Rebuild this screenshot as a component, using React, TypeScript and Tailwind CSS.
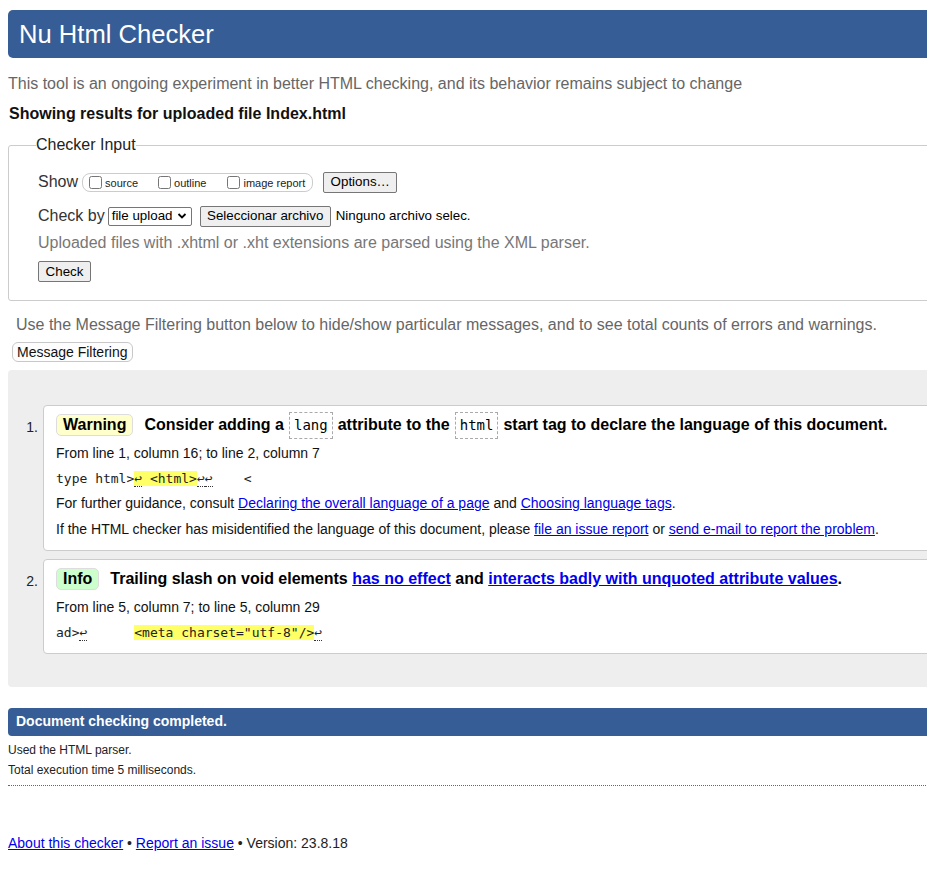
import React from 'react';

function Btn({ children, className = '' }: { children: React.ReactNode; className?: string }) {
  return (
    <button className={`h-[21px] px-[6px] bg-[#efefef] border border-[#767676] rounded-[2px] text-[13.33px] leading-none text-black ${className}`}>
      {children}
    </button>
  );
}

function Lf() {
  return <span className="border-b border-dotted border-[#333]">↩</span>;
}

function CodeBox({ children }: { children: React.ReactNode }) {
  return (
    <code className="inline-flex items-center h-[27px] px-[4px] mx-[5px] border border-dashed border-[#aaa] font-['DejaVu_Sans_Mono',monospace] font-normal text-[14px]">
      {children}
    </code>
  );
}

export default function App() {
  return (
    <div className="w-[927px] h-[885px] overflow-hidden bg-white text-black font-['Liberation_Sans',Arial,sans-serif]">
      <div className="w-[1000px] pl-2 pt-[10px]">
        <h1 className="h-12 flex items-center pl-[11px] bg-[#365d95] text-white text-[25.6px] font-normal rounded-l-[5px]">
          Nu Html Checker
        </h1>
        <p className="mt-[17px] text-base leading-[18px] text-[#666]">
          This tool is an ongoing experiment in better HTML checking, and its behavior remains subject to change
        </p>
        <p className="mt-[12px] pl-px text-base leading-[18px] font-bold text-[#111]">Showing results for uploaded file Index.html</p>

        {/* Checker input */}
        <fieldset className="mt-[13px] border border-[#ccc] rounded-[3px] pl-[29px] pb-[17px]">
          <legend className="-ml-[2px] text-base leading-[18px] text-[#222]">Checker Input</legend>
          <div className="mt-[17px] h-[22px] flex items-center">
            <span className="text-base text-[#333]">Show</span>
            <div className="ml-[4px] h-[19px] flex items-center pl-[6px] pr-[7px] border border-[#ccc] rounded-[8px]">
              <label className="flex items-center">
                <input type="checkbox" className="w-[13px] h-[13px] m-0" />
                <span className="ml-[3px] text-[11px] text-[#222] pt-[2px]">source</span>
              </label>
              <label className="flex items-center ml-[20px]">
                <input type="checkbox" className="w-[13px] h-[13px] m-0" />
                <span className="ml-[3px] text-[11px] text-[#222] pt-[2px]">outline</span>
              </label>
              <label className="flex items-center ml-[21px]">
                <input type="checkbox" className="w-[13px] h-[13px] m-0" />
                <span className="ml-[3px] text-[11px] text-[#222] pt-[2px]">image report</span>
              </label>
            </div>
            <Btn className="ml-[10px] w-[74px]">Options…</Btn>
          </div>
          <div className="mt-[12px] h-[22px] flex items-center">
            <span className="text-base text-[#333]">Check by</span>
            <div className="ml-[3px] w-[84px] h-[19px] flex items-center justify-between pl-[3px] pr-[4px] border border-[#767676] rounded-[2px] text-[13.33px]">
              <span>file upload</span>
              <svg width="10" height="10" viewBox="0 0 10 10">
                <path d="M1.5 3 L5 6.5 L8.5 3" fill="none" stroke="#000" strokeWidth="1.8" />
              </svg>
            </div>
            <Btn className="ml-[8px] w-[131px]">Seleccionar archivo</Btn>
            <span className="ml-[5px] text-[13.33px]">Ninguno archivo selec.</span>
          </div>
          <p className="mt-[7px] text-base leading-[18px] text-[#777]">
            Uploaded files with .xhtml or .xht extensions are parsed using the XML parser.
          </p>
          <Btn className="mt-[9px] w-[53px] h-[20px]">Check</Btn>
        </fieldset>

        <p className="mt-[15px] pl-2 text-base leading-[18px] text-[#666]">
          Use the Message Filtering button below to hide/show particular messages, and to see total counts of errors and warnings.
        </p>
        <button className="block mt-[8px] ml-1 h-[20px] px-[4px] bg-[#fdfdfd] border border-[#c8c8c8] rounded-[6px] text-[14px] leading-none text-[#111]">
          Message Filtering
        </button>

        {/* Results */}
        <div className="mt-[8px] bg-[#eee] rounded-l-[4px] pt-[35px] pb-[33px]">
          <ol className="flex flex-col gap-[8px]">
            <li className="flex">
              <span className="w-[35px] shrink-0 text-right pr-[5px] pt-[14px] text-[14px] leading-[16px] text-[#222]">1.</span>
              <div className="flex-1 bg-white border border-[#ccc] rounded-l-[4px] pl-[12px] pt-[6px] pb-[13px]">
                <div className="h-[27px] flex items-center text-base font-bold">
                  <span className="h-[22px] flex items-center px-[6px] bg-[#ffc] border border-[#ddd] rounded-[5px]">Warning</span>
                  <span className="ml-[11px]">Consider adding a</span>
                  <CodeBox>lang</CodeBox>
                  <span>attribute to the</span>
                  <CodeBox>html</CodeBox>
                  <span>start tag to declare the language of this document.</span>
                </div>
                <p className="mt-[6px] text-[14px] leading-[16px] text-[#111]">From line 1, column 16; to line 2, column 7</p>
                <p className="mt-[10px] text-[13px] leading-[16px] whitespace-pre font-['DejaVu_Sans_Mono',monospace] text-[#222]">
                  type html&gt;<b className="font-normal bg-[#ff6]"><Lf /> &lt;html&gt;</b><Lf /><Lf />    &lt;
                </p>
                <p className="mt-[8px] text-[14px] leading-[16px] text-[#111]">
                  For further guidance, consult{' '}
                  <a className="text-[#00e] underline">Declaring the overall language of a page</a> and{' '}
                  <a className="text-[#00e] underline">Choosing language tags</a>.
                </p>
                <p className="mt-[10px] text-[14px] leading-[16px] text-[#111]">
                  If the HTML checker has misidentified the language of this document, please{' '}
                  <a className="text-[#00e] underline">file an issue report</a> or{' '}
                  <a className="text-[#00e] underline">send e-mail to report the problem</a>.
                </p>
              </div>
            </li>
            <li className="flex">
              <span className="w-[35px] shrink-0 text-right pr-[5px] pt-[14px] text-[14px] leading-[16px] text-[#222]">2.</span>
              <div className="flex-1 bg-white border border-[#ccc] rounded-l-[4px] pl-[12px] pt-[6px] pb-[12px]">
                <div className="h-[27px] flex items-center text-base font-bold">
                  <span className="h-[22px] flex items-center px-[6px] bg-[#cfc] border border-[#ddd] rounded-[5px]">Info</span>
                  <span className="ml-[11px]">
                    Trailing slash on void elements <a className="text-[#00e] underline">has no effect</a> and{' '}
                    <a className="text-[#00e] underline">interacts badly with unquoted attribute values</a>.
                  </span>
                </div>
                <p className="mt-[6px] text-[14px] leading-[16px] text-[#111]">From line 5, column 7; to line 5, column 29</p>
                <p className="mt-[10px] text-[13px] leading-[16px] whitespace-pre font-['DejaVu_Sans_Mono',monospace] text-[#222]">
                  ad&gt;<Lf />      <b className="font-normal bg-[#ff6]">&lt;meta charset="utf-8"/&gt;</b><Lf />
                </p>
              </div>
            </li>
          </ol>
        </div>

        <div className="mt-[21px] h-[28px] flex items-center pl-2 bg-[#365d95] rounded-l-[4px] text-white text-[14px] font-bold">
          Document checking completed.
        </div>
        <p className="mt-[7px] text-[12px] leading-[14px] text-[#222]">Used the HTML parser.</p>
        <p className="mt-[6px] text-[12px] leading-[14px] text-[#222]">Total execution time 5 milliseconds.</p>
        <hr className="mt-[8px] border-0 border-t border-dotted border-[#666]" />
        <p className="mt-[49px] text-[14px] leading-[16px] text-[#222]">
          <a className="text-[#00e] underline">About this checker</a> • <a className="text-[#00e] underline">Report an issue</a> • Version: 23.8.18
        </p>
      </div>
    </div>
  );
}
